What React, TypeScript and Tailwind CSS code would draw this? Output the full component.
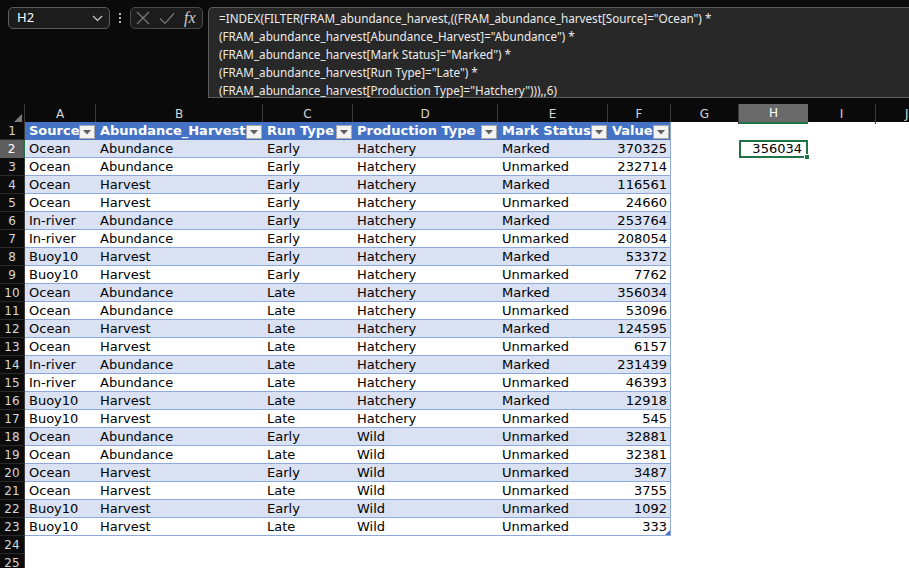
import React from 'react';

type Row = [string, string, string, string, string, number];

const data: Row[] = [
  ['Ocean', 'Abundance', 'Early', 'Hatchery', 'Marked', 370325],
  ['Ocean', 'Abundance', 'Early', 'Hatchery', 'Unmarked', 232714],
  ['Ocean', 'Harvest', 'Early', 'Hatchery', 'Marked', 116561],
  ['Ocean', 'Harvest', 'Early', 'Hatchery', 'Unmarked', 24660],
  ['In-river', 'Abundance', 'Early', 'Hatchery', 'Marked', 253764],
  ['In-river', 'Abundance', 'Early', 'Hatchery', 'Unmarked', 208054],
  ['Buoy10', 'Harvest', 'Early', 'Hatchery', 'Marked', 53372],
  ['Buoy10', 'Harvest', 'Early', 'Hatchery', 'Unmarked', 7762],
  ['Ocean', 'Abundance', 'Late', 'Hatchery', 'Marked', 356034],
  ['Ocean', 'Abundance', 'Late', 'Hatchery', 'Unmarked', 53096],
  ['Ocean', 'Harvest', 'Late', 'Hatchery', 'Marked', 124595],
  ['Ocean', 'Harvest', 'Late', 'Hatchery', 'Unmarked', 6157],
  ['In-river', 'Abundance', 'Late', 'Hatchery', 'Marked', 231439],
  ['In-river', 'Abundance', 'Late', 'Hatchery', 'Unmarked', 46393],
  ['Buoy10', 'Harvest', 'Late', 'Hatchery', 'Marked', 12918],
  ['Buoy10', 'Harvest', 'Late', 'Hatchery', 'Unmarked', 545],
  ['Ocean', 'Abundance', 'Early', 'Wild', 'Unmarked', 32881],
  ['Ocean', 'Abundance', 'Late', 'Wild', 'Unmarked', 32381],
  ['Ocean', 'Harvest', 'Early', 'Wild', 'Unmarked', 3487],
  ['Ocean', 'Harvest', 'Late', 'Wild', 'Unmarked', 3755],
  ['Buoy10', 'Harvest', 'Early', 'Wild', 'Unmarked', 1092],
  ['Buoy10', 'Harvest', 'Late', 'Wild', 'Unmarked', 333],
];

const headers = ['Source', 'Abundance_Harvest', 'Run Type', 'Production Type', 'Mark Status', 'Value'];

const formula = [
  '=INDEX(FILTER(FRAM_abundance_harvest,((FRAM_abundance_harvest[Source]="Ocean") *',
  '(FRAM_abundance_harvest[Abundance_Harvest]="Abundance") *',
  '(FRAM_abundance_harvest[Mark Status]="Marked") *',
  '(FRAM_abundance_harvest[Run Type]="Late") *',
  '(FRAM_abundance_harvest[Production Type]="Hatchery"))),,6)',
];

const cols = 'grid grid-cols-[25px_71px_167px_90px_145px_110px_63px_68px_69px_68px_1fr]';

const RowHead = ({ n, active }: { n: number; active?: boolean }) => (
  <div
    className={`h-[18px] flex items-center justify-center text-[12px] border-b ${
      active
        ? 'bg-[#5e5e5e] text-white border-b-[#5e5e5e] border-r-2 border-r-[#217346]'
        : 'bg-[#0c0c0c] text-[#d6d6d6] border-b-[#2a2a2a] border-r border-r-[#3a3a3a]'
    }`}
  >
    {n}
  </div>
);

const FilterButton = () => (
  <div className="absolute right-[1px] top-[3px] w-[16px] h-[14px] bg-[#f3f3f3] border border-[#a9a9a9] flex items-center justify-center">
    <svg width="8" height="5" viewBox="0 0 8 5">
      <path d="M0 0 L8 0 L4 4.5 Z" fill="#5f5f5f" />
    </svg>
  </div>
);

export default function App() {
  return (
    <div className="w-[909px] h-[568px] overflow-hidden bg-white font-['DejaVu_Sans',sans-serif]">
      {/* name box + formula bar */}
      <div className="h-[104px] bg-[#0a0a0a] flex items-start pt-[7px] pl-[8px]">
        <div className="w-[102px] h-[22px] rounded-[5px] border border-[#5c5c5c] bg-[#1c1c1c] flex items-center justify-between pl-[8px] pr-[6px]">
          <span className="text-white text-[13px] font-['Noto_Sans',sans-serif]">H2</span>
          <svg width="11" height="7" viewBox="0 0 11 7">
            <path d="M1 1 L5.5 5.5 L10 1" fill="none" stroke="#cfcfcf" strokeWidth="1.2" />
          </svg>
        </div>
        <div className="w-[20px] h-[22px] flex flex-col items-center justify-center gap-[2px]">
          <span className="w-[2px] h-[2px] bg-[#bdbdbd]" />
          <span className="w-[2px] h-[2px] bg-[#bdbdbd]" />
          <span className="w-[2px] h-[2px] bg-[#bdbdbd]" />
        </div>
        <div className="w-[73px] h-[22px] rounded-[5px] border border-[#4a4a4a] bg-[#1c1c1c] flex items-center pl-[5px] gap-[9px]">
          <svg width="14" height="14" viewBox="0 0 14 14">
            <path d="M1 1 L13 13 M13 1 L1 13" stroke="#7a7a7a" strokeWidth="1.2" />
          </svg>
          <svg width="16" height="13" viewBox="0 0 16 13">
            <path d="M1 6.5 L6 11.5 L15 1.5" fill="none" stroke="#7a7a7a" strokeWidth="1.2" />
          </svg>
          <span className="text-[#cfcfcf] text-[16px] italic font-['Liberation_Serif',serif] leading-none">fx</span>
        </div>
        <div className="ml-[5px] flex-1 h-[91px] rounded-tl-[5px] border border-r-0 border-[#5c5c5c] bg-[#282828] pl-[10px] pt-[1px]">
          {formula.map((line) => (
            <div key={line} className="h-[18px] leading-[18px] text-[11.7px] text-[#ececec] whitespace-nowrap font-['Noto_Sans',sans-serif]">
              {line}
            </div>
          ))}
        </div>
      </div>

      {/* column letters */}
      <div className={`${cols} h-[18px] bg-[#0a0a0a] text-[12px] text-[#d6d6d6]`}>
        <div className="border-r border-[#3a3a3a] flex items-end justify-end pr-[2px] pb-[2px]">
          <svg width="8" height="8" viewBox="0 0 8 8">
            <path d="M8 0 L8 8 L0 8 Z" fill="#7a7a7a" />
          </svg>
        </div>
        {['A', 'B', 'C', 'D', 'E', 'F', 'G'].map((c) => (
          <div key={c} className="border-r border-[#3a3a3a] flex items-center justify-center">
            {c}
          </div>
        ))}
        <div className="bg-[#6a6a6a] border-b-2 border-[#217346] flex items-center justify-center text-white">H</div>
        <div className="border-r border-[#3a3a3a] flex items-center justify-center">I</div>
        <div className="flex items-center pl-[29px] overflow-hidden">J</div>
      </div>

      {/* table header */}
      <div className={cols}>
        <RowHead n={1} />
        {headers.map((h, i) => (
          <div
            key={h}
            className={`relative h-[18px] bg-[#4472c4] overflow-hidden whitespace-nowrap text-white font-bold text-[13px] leading-[18px] pl-[4px] ${
              i === 5 ? 'border-r border-[#8ea9db]' : ''
            }`}
          >
            {h}
            <FilterButton />
          </div>
        ))}
        <div />
        <div />
        <div />
        <div />
      </div>

      {/* data rows */}
      {data.map((r, idx) => {
        const n = idx + 2;
        const band = idx % 2 === 0 ? 'bg-[#d9e1f2]' : 'bg-white';
        const cell = `h-[18px] ${band} border-b border-[#8ea9db] text-[13px] leading-[17px] text-black whitespace-nowrap overflow-hidden`;
        return (
          <div key={n} className={cols}>
            <RowHead n={n} active={n === 2} />
            <div className={`${cell} pl-[4px]`}>{r[0]}</div>
            <div className={`${cell} pl-[4px]`}>{r[1]}</div>
            <div className={`${cell} pl-[4px]`}>{r[2]}</div>
            <div className={`${cell} pl-[4px]`}>{r[3]}</div>
            <div className={`${cell} pl-[4px]`}>{r[4]}</div>
            <div className={`${cell} relative text-right pr-[3px] border-r`}>
              {r[5]}
              {n === 23 && (
                <svg className="absolute right-0 bottom-0" width="5" height="5" viewBox="0 0 5 5">
                  <path d="M5 0 L5 5 L0 5 Z" fill="#4472c4" />
                </svg>
              )}
            </div>
            <div />
            {n === 2 ? (
              <div className="relative h-[18px] border-2 border-[#217346] text-[13px] leading-[14px] text-black text-right pr-[4px]">
                356034
                <span className="absolute -right-[4px] -bottom-[4px] w-[6px] h-[6px] bg-[#217346] border border-white" />
              </div>
            ) : (
              <div />
            )}
            <div />
            <div />
          </div>
        );
      })}

      {[24, 25].map((n) => (
        <div key={n} className={cols}>
          <RowHead n={n} />
        </div>
      ))}
    </div>
  );
}
